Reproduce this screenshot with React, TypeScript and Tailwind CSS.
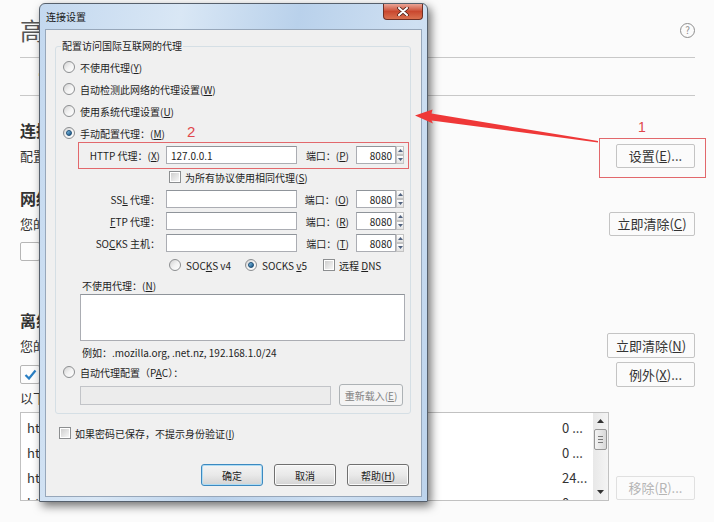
import type { ReactNode } from 'react';

const cjk = "font-['Noto_Sans_CJK_SC',sans-serif]";

function Radio({ checked = false }: { checked?: boolean }) {
  return (
    <span className="flex h-[12px] w-[12px] shrink-0 items-center justify-center rounded-full border border-[#8c8e90] bg-linear-to-br from-[#d2d2d2] via-[#f2f2f2] to-white">
      {checked && (
        <span className="h-[6px] w-[6px] rounded-full border border-[#1b4c74] bg-linear-to-br from-[#86c8ee] to-[#13507f]" />
      )}
    </span>
  );
}

function Check() {
  return (
    <span className="h-[12px] w-[12px] shrink-0 border border-[#8c8e90] bg-white p-[1px]">
      <span className="block h-full w-full bg-linear-to-br from-[#cfcfcf] to-[#f7f7f7]" />
    </span>
  );
}

function Field({ className = '', children }: { className?: string; children?: ReactNode }) {
  return (
    <div className={`flex h-[18px] items-center border border-[#abadb3] border-t-[#8f949a] bg-white px-[4px] ${className}`}>
      {children}
    </div>
  );
}

function SpinButton({ up = false }: { up?: boolean }) {
  return (
    <div className="flex h-[9px] w-[8px] items-center justify-center border border-[#c3c3c3] bg-linear-to-b from-white to-[#e2e2e2]">
      <svg width="5" height="3" viewBox="0 0 5 3">
        <path d={up ? 'M0 3 L2.5 0 L5 3 Z' : 'M0 0 L5 0 L2.5 3 Z'} fill="#4f617f" />
      </svg>
    </div>
  );
}

function Port() {
  return (
    <div className="ml-[7px] flex">
      <div className="flex h-[18px] w-[40px] items-center justify-end border border-[#abadb3] border-t-[#8f949a] bg-white pr-[3px]">
        8080
      </div>
      <div className="flex flex-col">
        <SpinButton up />
        <SpinButton />
      </div>
    </div>
  );
}

function WinButton({
  children,
  className = '',
  primary = false,
  disabled = false,
}: {
  children: ReactNode;
  className?: string;
  primary?: boolean;
  disabled?: boolean;
}) {
  if (disabled) {
    return (
      <div className={`flex h-[22px] items-center justify-center rounded-[3px] border border-[#adb2b5] bg-[#f4f4f4] text-[#838383] ${className}`}>
        {children}
      </div>
    );
  }
  return (
    <div
      className={`flex h-[22px] items-center justify-center rounded-[3px] border bg-linear-to-b from-[#f4f4f4] via-[#e9e9e9] to-[#d3d3d3] ${
        primary ? 'border-[#3c89c0] shadow-[inset_0_0_0_1px_#aedcf4]' : 'border-[#707070] shadow-[inset_0_0_0_1px_#fbfbfb]'
      } ${className}`}
    >
      {children}
    </div>
  );
}

function PageButton({ children, className = '', disabled = false }: { children: ReactNode; className?: string; disabled?: boolean }) {
  return (
    <div
      className={`flex h-[24px] shrink-0 items-center justify-center rounded-[2px] border bg-[#fbfbfb] text-[13px] ${
        disabled ? 'border-[#e0e0e0] text-[#b5b5b5]' : 'border-[#c4c4c4] text-[#333333]'
      } ${className}`}
    >
      {children}
    </div>
  );
}

function PageCheck({ checked = false }: { checked?: boolean }) {
  return (
    <span className="flex h-[19px] w-[20px] shrink-0 items-center justify-center rounded-[2px] border border-[#b6b6b6] bg-[#fdfdfd]">
      {checked && (
        <svg width="13" height="11" viewBox="0 0 13 11">
          <path d="M1.5 6 L5 9.5 L11.5 1.5" fill="none" stroke="#2a7fc4" strokeWidth="2.2" />
        </svg>
      )}
    </span>
  );
}

const siteRows = [
  { url: 'http://www.baidu.com', size: '0 ...' },
  { url: 'http://tieba.baidu.com', size: '0 ...' },
  { url: 'http://www.qq.com', size: '24...' },
  { url: 'http://mail.163.com', size: '0 ...' },
];

function Page() {
  return (
    <div className={`${cjk} pl-[20px] pr-[19px] text-[13px] text-[#333333]`}>
      <div className="flex h-[58px] items-center justify-between border-b border-[#c8c8c8] pt-[3px]">
        <span className="text-[24px] text-[#555555]">高级</span>
        <span className="flex h-[15px] w-[15px] items-center justify-center rounded-full border border-[#8d8d8d] text-[10px] leading-none text-[#8d8d8d]">
          ?
        </span>
      </div>
      <div className="flex h-[38px] items-center gap-[18px] border-b border-[#c8c8c8] pl-[18px] text-[13px]">
        <span>常规</span>
        <span>数据反馈</span>
        <span>网络</span>
        <span>更新</span>
        <span>证书</span>
      </div>

      <div className="mt-[23px] h-[22px] text-[16px] leading-[22px] font-semibold">连接</div>
      <div className="mt-[3px] flex h-[24px] items-center justify-between">
        <span>配置 Firefox 如何连接至国际互联网</span>
        <PageButton className="w-[79px]">
          设置(<u>E</u>)...
        </PageButton>
      </div>

      <div className="mt-[19px] h-[22px] text-[16px] leading-[22px] font-semibold">网络内容缓存</div>
      <div className="mt-[3px] flex h-[24px] items-center justify-between">
        <span>您的网页内容缓存目前使用了 0 字节磁盘空间</span>
        <PageButton className="w-[86px]">
          立即清除(<u>C</u>)
        </PageButton>
      </div>
      <div className="mt-[6px] flex h-[19px] items-center gap-[6px]">
        <PageCheck />
        <span>覆盖自动缓存管理</span>
      </div>

      <div className="mt-[48px] h-[22px] text-[16px] leading-[22px] font-semibold">离线网页内容和用户数据</div>
      <div className="mt-[2px] flex h-[25px] items-center justify-between">
        <span>您的应用程序缓存目前使用了 0 字节磁盘空间</span>
        <PageButton className="h-[25px] w-[88px]">
          立即清除(<u>N</u>)
        </PageButton>
      </div>
      <div className="mt-[4px] flex h-[25px] items-center justify-between">
        <div className="flex items-center gap-[6px]">
          <PageCheck checked />
          <span>当网站请求存储离线数据时告诉我</span>
        </div>
        <PageButton className="h-[25px] w-[79px]">
          例外(<u>X</u>)...
        </PageButton>
      </div>
      <div className="mt-[2px] h-[18px] leading-[18px]">以下网站已被允许存储离线数据：</div>

      <div className="mt-[5px] flex items-end justify-between">
        <div className="flex h-[89px] w-[589px] overflow-hidden border border-[#c1c1c1] bg-white">
          <div className="flex-1 pt-[2px]">
            {siteRows.map((row) => (
              <div key={row.url} className="flex h-[25px] items-center pl-[6px]">
                <span className="flex-1">{row.url}</span>
                <span className="w-[31px]">{row.size}</span>
              </div>
            ))}
          </div>
          <div className="flex w-[15px] flex-col bg-linear-to-r from-[#e8e8e8] to-[#f4f4f4]">
            <div className="flex h-[16px] items-center justify-center">
              <svg width="7" height="4" viewBox="0 0 7 4">
                <path d="M0 4 L3.5 0 L7 4 Z" fill="#333" />
              </svg>
            </div>
            <div className="mx-[1px] flex h-[21px] flex-col items-center justify-center gap-[2px] rounded-[2px] border border-[#979797] bg-linear-to-r from-[#f4f4f4] to-[#d8d8d8]">
              <span className="h-px w-[5px] bg-[#7a7a7a]" />
              <span className="h-px w-[5px] bg-[#7a7a7a]" />
              <span className="h-px w-[5px] bg-[#7a7a7a]" />
            </div>
            <div className="mt-auto flex h-[16px] items-center justify-center">
              <svg width="7" height="4" viewBox="0 0 7 4">
                <path d="M0 0 L7 0 L3.5 4 Z" fill="#333" />
              </svg>
            </div>
          </div>
        </div>
        <PageButton disabled className="mb-[1px] w-[79px]">
          移除(<u>R</u>)...
        </PageButton>
      </div>
    </div>
  );
}

function ProxyRow({ label, port, value }: { label: ReactNode; port: ReactNode; value?: string }) {
  return (
    <div className="flex h-[22px] items-center">
      <span className="w-[104px] text-right">{label}</span>
      <Field className="ml-[6px] w-[131px]">{value}</Field>
      <span className="w-[52px] text-right">{port}</span>
      <Port />
    </div>
  );
}

function Dialog() {
  return (
    <div className="absolute left-[39px] top-[3px] flex h-[499px] w-[389px] flex-col rounded-t-[6px] border border-[#56606c] bg-[linear-gradient(100deg,#c3d8ef_0%,#d9e7f5_30%,#b9d1eb_55%,#cfe0f2_80%,#bcd3ec_100%)] px-[5px] pb-[4px] shadow-[3px_4px_10px_rgba(0,0,0,0.55)]">
      <div className={`${cjk} flex h-[25px] items-center pl-[1px] text-[10px] text-[#1a1a1a]`}>连接设置</div>
      <div className="absolute right-[4px] top-0 flex h-[16px] w-[40px] items-center justify-center rounded-b-[4px] border border-t-0 border-[#6e2f24] bg-linear-to-b from-[#e9a496] via-[#c9482f] to-[#d9704f]">
        <svg width="12" height="9" viewBox="0 0 12 9">
          <path d="M2 1 L10 8 M10 1 L2 8" stroke="#4a1f18" strokeWidth="3.6" strokeLinecap="round" />
          <path d="M2 1 L10 8 M10 1 L2 8" stroke="#ffffff" strokeWidth="2" strokeLinecap="round" />
        </svg>
      </div>

      <div className={`${cjk} flex flex-1 flex-col border border-[#97a7ba] bg-[#f0f0f0] text-[10px] text-[#1e1e1e]`}>
        <div className="relative ml-[9px] mt-[16px] h-[368px] w-[356px] rounded-[3px] border border-[#d5dfe5] pt-[9px]">
          <span className="absolute left-[5px] top-[-8px] bg-[#f0f0f0] px-px leading-[14px]">配置访问国际互联网的代理</span>

          <div className="flex h-[22px] items-center gap-[5px] pl-[7px]">
            <Radio />
            <span>
              不使用代理(<u>Y</u>)
            </span>
          </div>
          <div className="flex h-[22px] items-center gap-[5px] pl-[7px]">
            <Radio />
            <span>
              自动检测此网络的代理设置(<u>W</u>)
            </span>
          </div>
          <div className="flex h-[22px] items-center gap-[5px] pl-[7px]">
            <Radio />
            <span>
              使用系统代理设置(<u>U</u>)
            </span>
          </div>
          <div className="flex h-[22px] items-center gap-[5px] pl-[7px]">
            <Radio checked />
            <span>
              手动配置代理：(<u>M</u>)
            </span>
          </div>

          <ProxyRow
            label={
              <>
                HTTP 代理：(<u>X</u>)
              </>
            }
            port={
              <>
                端口：(<u>P</u>)
              </>
            }
            value="127.0.0.1"
          />
          <div className="flex h-[22px] items-center gap-[4px] pl-[113px]">
            <Check />
            <span>
              为所有协议使用相同代理(<u>S</u>)
            </span>
          </div>
          <ProxyRow
            label={
              <>
                SS<u>L</u> 代理：
              </>
            }
            port={
              <>
                端口：(<u>O</u>)
              </>
            }
          />
          <ProxyRow
            label={
              <>
                <u>F</u>TP 代理：
              </>
            }
            port={
              <>
                端口：(<u>R</u>)
              </>
            }
          />
          <ProxyRow
            label={
              <>
                SO<u>C</u>KS 主机：
              </>
            }
            port={
              <>
                端口：(<u>T</u>)
              </>
            }
          />
          <div className="flex h-[22px] items-center pl-[113px]">
            <div className="flex w-[76px] items-center gap-[5px]">
              <Radio />
              <span>
                SOC<u>K</u>S v4
              </span>
            </div>
            <div className="flex w-[78px] items-center gap-[5px]">
              <Radio checked />
              <span>
                SOCKS <u>v</u>5
              </span>
            </div>
            <div className="flex items-center gap-[4px]">
              <Check />
              <span>
                远程 <u>D</u>NS
              </span>
            </div>
          </div>

          <div className="flex h-[18px] items-center pl-[26px]">
            不使用代理：(<u>N</u>)
          </div>
          <div className="ml-[24px] h-[47px] w-[325px] border border-[#abadb3] border-t-[#8f949a] bg-white" />
          <div className="flex h-[22px] items-center pl-[26px]">例如：.mozilla.org, .net.nz, 192.168.1.0/24</div>
          <div className="flex h-[18px] items-center gap-[5px] pl-[7px]">
            <Radio />
            <span>
              自动代理配置（P<u>A</u>C）：
            </span>
          </div>
          <div className="mt-[3px] flex h-[22px] items-center pl-[24px]">
            <div className="h-[19px] w-[251px] border border-[#c2c4c8] bg-[#ececec]" />
            <WinButton disabled className="ml-[8px] w-[64px]">
              重新载入(<u>E</u>)
            </WinButton>
          </div>
        </div>

        <div className="mt-[9px] flex h-[20px] items-center gap-[4px] pl-[13px]">
          <Check />
          <span>
            如果密码已保存，不提示身份验证(<u>I</u>)
          </span>
        </div>

        <div className="mt-[21px] flex justify-end gap-[11px] pr-[12px]">
          <WinButton primary className="w-[62px]">
            确定
          </WinButton>
          <WinButton className="w-[62px]">取消</WinButton>
          <WinButton className="w-[62px]">
            帮助(<u>H</u>)
          </WinButton>
        </div>
      </div>
    </div>
  );
}

export default function App() {
  return (
    <div className="relative h-[522px] w-[714px] overflow-hidden bg-[#fbfbfb]">
      <Page />
      <Dialog />

      {/* annotations drawn over the screenshot */}
      <div className="absolute left-[78px] top-[142px] h-[27px] w-[331px] border border-[#e2686c]" />
      <div className="absolute left-[599px] top-[138px] h-[40px] w-[107px] border border-[#e2686c]" />
      <span className="absolute left-[187px] top-[122px] font-['Liberation_Sans',sans-serif] text-[15px] leading-[20px] text-[#e0474c]">2</span>
      <span className="absolute left-[638px] top-[117px] font-['Liberation_Sans',sans-serif] text-[14px] leading-[20px] text-[#e0474c]">1</span>
      <svg className="pointer-events-none absolute left-0 top-0" width="714" height="522" viewBox="0 0 714 522">
        <polygon
          points="415,115.5 432.5,109.5 431.5,113.5 598,141 598,142.5 431.5,120.5 433,123.5"
          fill="#ef3838"
        />
      </svg>
    </div>
  );
}
